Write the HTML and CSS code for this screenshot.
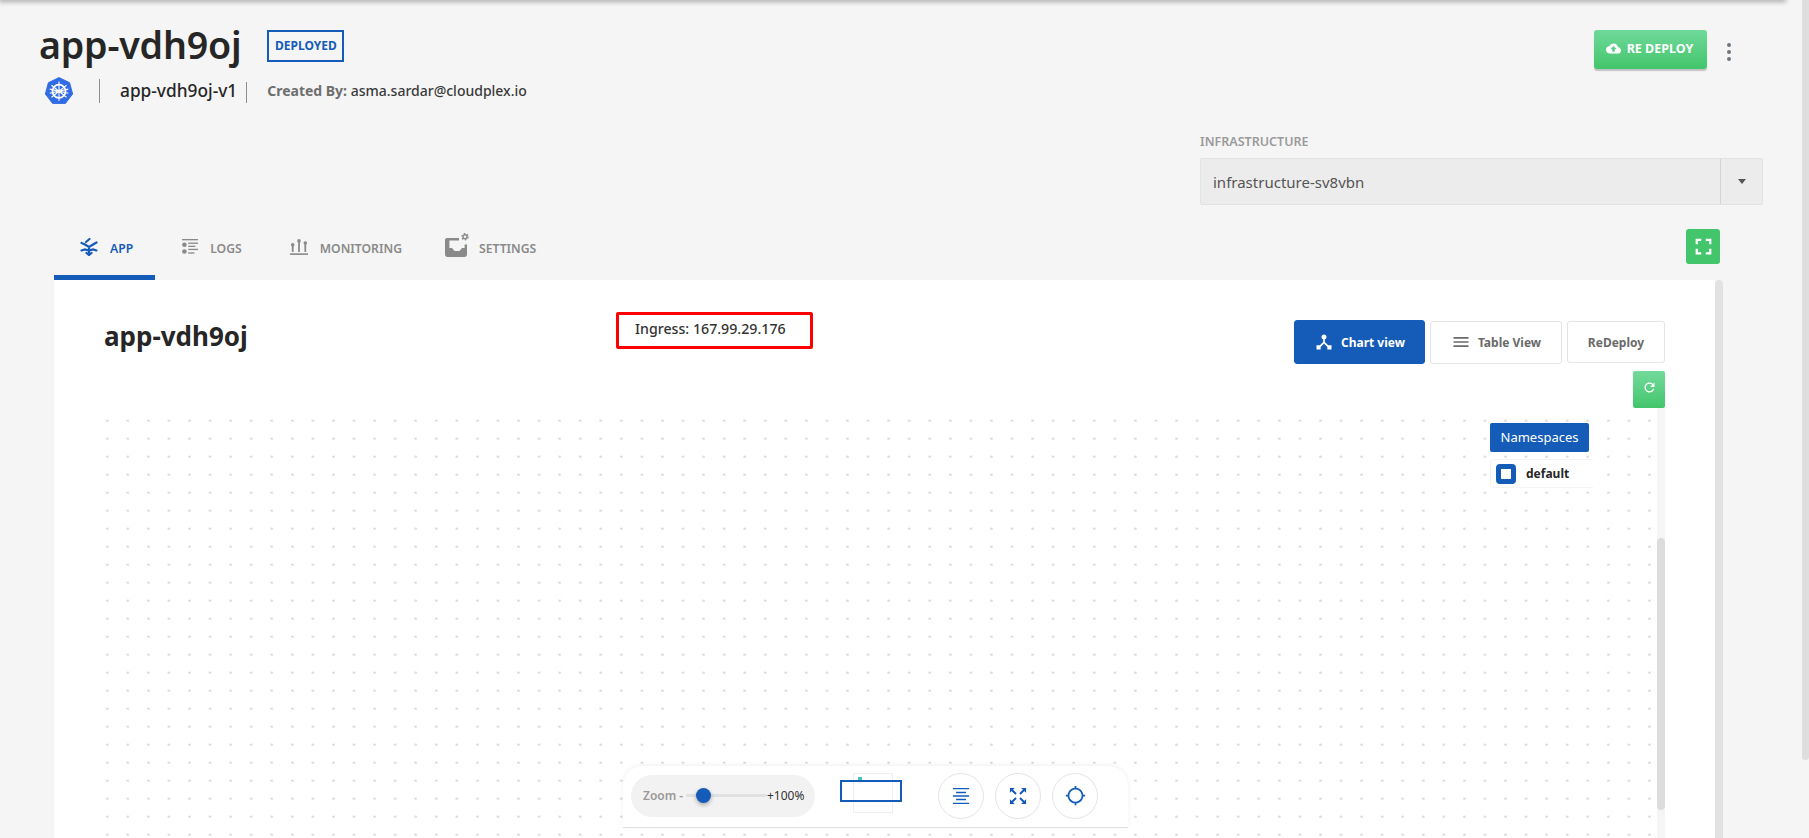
FILE: index.html
```html
<!DOCTYPE html>
<html lang="en">
<head>
  <meta charset="UTF-8" />
  <meta name="viewport" content="width=device-width, initial-scale=1" />
  <title>app-vdh9oj</title>
  <link rel="stylesheet" href="styles.css">
</head>
<body>
  <div class="topbar"></div>
  <div class="page-scroll"></div>

  <header class="page-head">
    <div class="head-left">
      <div class="title-row">
        <h1>app-vdh9oj</h1>
        <span class="status">DEPLOYED</span>
      </div>
      <div class="meta-row">
        <svg class="kube" viewBox="0 0 28 28">
          <path d="M14 .6 24.6 5.7 27.6 17 20.4 26.4 7.6 26.4.4 17 3.4 5.7Z" fill="#326ce5" stroke="#326ce5" stroke-linejoin="round"/>
          <g fill="none" stroke="#fff">
            <circle cx="14" cy="14.2" r="6.6" stroke-width="1.7"/>
            <circle cx="14" cy="14.2" r="1.4" fill="#fff" stroke="none"/>
            <path stroke-width="1.1" d="M14 4.6V23.8M6.5 8.2 21.5 20.2M21.5 8.2 6.5 20.2M4.7 16.3 23.3 12.1M23.3 16.3 4.7 12.1"/>
          </g>
        </svg>
        <span class="version"><span>app-vdh9oj-v1</span></span>
        <span class="created"><b>Created By:</b> asma.sardar@cloudplex.io</span>
      </div>
    </div>
    <div class="head-right">
      <button class="redeploy-btn">
        <svg viewBox="0 0 24 24"><path d="M19.35 10.04C18.67 6.59 15.64 4 12 4 9.11 4 6.6 5.64 5.35 8.04 2.34 8.36 0 10.91 0 14c0 3.31 2.69 6 6 6h13c2.76 0 5-2.24 5-5 0-2.64-2.05-4.78-4.65-4.96zM14 13v4h-4v-4H7l5-5 5 5h-3z"/></svg>
        RE DEPLOY
      </button>
      <div class="more"><i></i><i></i><i></i></div>
    </div>
  </header>

  <section class="infra">
    <label>INFRASTRUCTURE</label>
    <div class="select">
      <span>infrastructure-sv8vbn</span>
      <div class="select-arrow"><i></i></div>
    </div>
  </section>

  <nav class="tabs">
    <a class="tab active">
      <svg class="tab-icon" viewBox="0 0 18 18" fill="none" stroke="currentColor" stroke-width="2.2" stroke-linecap="round">
        <path d="M1.5 5 5 6.500 9 9 13 6.500 16.500 4.500M6 4 9.500 1M1.500 12.500 5 11.500 9 12.500 13 11.500 16.500 12.500M9 9V16.500M6.500 15 9 17 11.500 15"/>
      </svg>
      APP
    </a>
    <a class="tab tab-logs">
      <svg class="tab-icon" viewBox="0 0 18 18" fill="currentColor">
        <rect x="0" y="0" width="18" height="1.500"/>
        <circle cx="2.700" cy="6.500" r="2.600"/>
        <circle cx="2.700" cy="14" r="2.600"/>
        <rect x="7" y="4" width="11" height="1.500"/>
        <rect x="7" y="7.500" width="8" height="1.500"/>
        <rect x="7" y="11" width="11" height="1.500"/>
        <rect x="7" y="15" width="7" height="1.500"/>
      </svg>
      LOGS
    </a>
    <a class="tab">
      <svg class="tab-icon" viewBox="0 0 20 18" fill="currentColor">
        <rect x="0" y="16" width="20" height="1.800"/>
        <rect x="2" y="7" width="2" height="7.500"/>
        <circle cx="3" cy="6.500" r="2"/>
        <rect x="9" y="3" width="2" height="11.500"/>
        <circle cx="10" cy="2.200" r="2"/>
        <rect x="16" y="5" width="2" height="9.500"/>
        <circle cx="17" cy="4.600" r="2"/>
      </svg>
      MONITORING
    </a>
    <a class="tab tab-settings">
      <svg class="tab-icon wide" viewBox="0 0 24 24" fill="currentColor">
        <path d="M2 5h12v2.400H4.400V15H7l2.500 3h5l2.500-3h2.600v-3.500H22V21.500c0 1.400-1.100 2.500-2.500 2.500H2.500C1.100 24 0 22.900 0 21.500V7c0-1.100.9-2 2-2z"/>
        <g fill="none" stroke="currentColor">
          <circle cx="20" cy="3.800" r="2" stroke-width="1.400"/>
          <circle cx="20" cy="3.800" r="3.100" stroke-width="1.300" stroke-dasharray="1.600 1.650"/>
        </g>
      </svg>
      SETTINGS
    </a>
    <button class="fullscreen-btn">
      <svg viewBox="0 0 24 24"><path d="M7 14H5v5h5v-2H7v-3zm-2-4h2V7h3V5H5v5zm12 7h-3v2h5v-5h-2v3zM14 5v2h3v3h2V5h-5z"/></svg>
    </button>
  </nav>

  <div class="card-wrap">
    <main class="card">
      <div class="card-head">
        <h2>app-vdh9oj</h2>
        <div class="ingress">Ingress: 167.99.29.176</div>
        <div class="card-actions">
          <div class="view-btns">
            <button class="view-btn chart">
              <svg viewBox="0 0 24 24"><path d="M17 16l-4-4V8.820C14.160 8.400 15 7.300 15 6c0-1.660-1.340-3-3-3S9 4.340 9 6c0 1.300.84 2.400 2 2.820V12l-4 4H3v5h5v-3.050l4-4.200 4 4.200V21h5v-5h-4z"/></svg>
              Chart view
            </button>
            <button class="view-btn table">
              <svg viewBox="0 0 24 24"><path d="M3 6h18v2H3zM3 11h18v2H3zM3 16h18v2H3z"/></svg>
              Table View
            </button>
            <button class="view-btn plain">ReDeploy</button>
          </div>
          <button class="refresh-btn">
            <svg viewBox="0 0 24 24"><path d="M17.650 6.350C16.200 4.900 14.210 4 12 4c-4.420 0-7.990 3.580-7.990 8s3.570 8 7.990 8c3.730 0 6.840-2.550 7.730-6h-2.080c-.82 2.330-3.040 4-5.650 4-3.310 0-6-2.690-6-6s2.690-6 6-6c1.660 0 3.140.69 4.220 1.780L13 11h7V4l-2.350 2.350z"/></svg>
          </button>
        </div>
      </div>

      <div class="canvas-row">
        <div class="canvas">
          <div class="legend">
            <div class="legend-title">Namespaces</div>
            <div class="legend-item"><span class="check"></span>default</div>
          </div>

          <div class="toolbar">
            <div class="zoom-pill">
              <span class="zoom-label">Zoom -</span>
              <div class="slider"><span class="slider-thumb"></span></div>
              <span class="zoom-value">+100%</span>
            </div>
            <div class="minimap">
              <span class="minimap-node"></span>
              <span class="minimap-view"></span>
            </div>
            <div class="tool-btns">
              <button class="tool-btn">
                <svg viewBox="0 0 20 20"><path d="M1 1h18v1.600H1zM4.500 5.400h11V7h-11zM1 9.200h18v1.600H1zM4.500 13h11v1.600h-11zM1 17.400h18V19H1z"/></svg>
              </button>
              <button class="tool-btn">
                <svg viewBox="0 0 20 20">
                  <path d="M1 1h5.500L1 6.500zM19 1v5.500L13.500 1zM1 19v-5.500L6.500 19zM19 19h-5.500L19 13.500z"/>
                  <path class="arrow-stems" d="M3 3 7.800 7.800M17 3 12.200 7.800M3 17 7.800 12.200M17 17 12.200 12.200"/>
                </svg>
              </button>
              <button class="tool-btn">
                <svg viewBox="0 0 24 24"><path d="M20.940 11c-.46-4.170-3.770-7.480-7.940-7.940V1h-2v2.060C6.830 3.520 3.520 6.830 3.060 11H1v2h2.060c.46 4.170 3.770 7.480 7.940 7.940V23h2v-2.060c4.170-.46 7.480-3.770 7.940-7.940H23v-2h-2.060zM12 19c-3.870 0-7-3.130-7-7s3.130-7 7-7 7 3.130 7 7-3.130 7-7 7z"/></svg>
              </button>
            </div>
          </div>
        </div>
        <div class="canvas-track"><span class="canvas-thumb"></span></div>
      </div>
    </main>
    <div class="card-scroll"></div>
  </div>
</body>
</html>
```

FILE: styles.css
```css
:root {
  --blue: #155cb8;
  --green: #43c56b;
  --bg: #f5f5f5;
  --text: #262626;
  --muted: #8a8a8a;
  --border: #e4e4e4;
}

* {
  box-sizing: border-box;
}

html,
body {
  height: 100%;
}

body {
  margin: 0;
  height: 838px;
  overflow: hidden;
  position: relative;
  display: flex;
  flex-direction: column;
  font-family: "Noto Sans", "Open Sans", sans-serif;
  background: var(--bg);
  color: var(--text);
}

button {
  font-family: inherit;
  cursor: pointer;
}

.topbar {
  position: absolute;
  top: -4px;
  left: 0;
  width: 1785px;
  height: 4px;
  box-shadow: 0 1px 5px 1px rgba(0, 0, 0, 0.3);
}

.page-scroll {
  position: absolute;
  top: 0;
  right: 0;
  width: 7px;
  height: 760px;
  background: #dedede;
  border-radius: 0 0 4px 4px;
}

/* header */
.page-head {
  display: flex;
  justify-content: space-between;
  height: 134px;
  padding: 22px 78px 0 39px;
  flex: none;
}

.title-row {
  display: flex;
  align-items: center;
  gap: 26px;
  height: 46px;
}

h1 {
  margin: 0;
  font-size: 37.6px;
  line-height: 46px;
  font-weight: 600;
  letter-spacing: -0.2px;
}

.status {
  display: flex;
  align-items: center;
  justify-content: center;
  width: 77px;
  height: 32px;
  margin-top: 1px;
  border: 2px solid var(--blue);
  color: var(--blue);
  font-size: 12px;
  font-weight: 700;
}

.meta-row {
  display: flex;
  align-items: center;
  height: 28px;
  margin-top: 9px;
  padding-left: 6px;
}

.kube {
  width: 28px;
  height: 28px;
}

.version {
  display: flex;
  align-items: center;
  height: 24px;
  margin-left: 26px;
  padding: 0 10px 0 20px;
  border-left: 1px solid #8f8f8f;
  font-size: 17.3px;
  font-weight: 500;
  position: relative;
}

.version span {
  margin-top: -2px;
}

.version::after {
  content: "";
  position: absolute;
  right: 0;
  top: 3px;
  bottom: 0;
  border-right: 1px solid #8f8f8f;
}

.created {
  margin-left: 20px;
  margin-top: -2px;
  font-size: 14px;
  font-weight: 500;
  color: #3a3a3a;
}

.created b {
  font-weight: 700;
  color: #6e6e6e;
}

.head-right {
  display: flex;
  align-items: flex-start;
  gap: 20px;
  padding-top: 8px;
}

.redeploy-btn {
  display: flex;
  align-items: center;
  justify-content: center;
  gap: 6px;
  width: 113px;
  height: 39px;
  padding: 0 2px 2px 0;
  border: 0;
  border-radius: 3px;
  background: linear-gradient(#6fd99a, var(--green));
  box-shadow: 0 2px 1px rgba(0, 0, 0, 0.2);
  color: #fff;
  font-size: 12.5px;
  font-weight: 700;
  white-space: nowrap;
}

.redeploy-btn svg {
  width: 15px;
  height: 15px;
  fill: #fff;
}

.more {
  display: flex;
  flex-direction: column;
  gap: 3px;
  padding-top: 13px;
}

.more i {
  display: block;
  width: 4px;
  height: 4px;
  border-radius: 50%;
  background: #6f7680;
}

/* infrastructure select */
.infra {
  flex: none;
  width: 563px;
  margin-left: 1200px;
}

.infra label {
  display: block;
  height: 24px;
  font-size: 12.5px;
  line-height: 16px;
  font-weight: 600;
  color: #9a9a9a;
}

.select {
  display: flex;
  align-items: center;
  justify-content: space-between;
  height: 47px;
  padding-left: 12px;
  background: #ececec;
  border: 1px solid #e2e2e2;
  border-radius: 2px;
  font-size: 15px;
  color: #555;
}

.select-arrow {
  display: flex;
  align-items: center;
  justify-content: center;
  width: 42px;
  height: 100%;
  border-left: 1px solid #d4d4d4;
}

.select-arrow i {
  width: 0;
  height: 0;
  border-left: 4px solid transparent;
  border-right: 4px solid transparent;
  border-top: 5px solid #555;
}

/* tabs */
.tabs {
  flex: none;
  display: flex;
  height: 75px;
  margin-left: 54px;
  width: 1666px;
}

.tab {
  display: flex;
  align-items: center;
  gap: 12px;
  height: 75px;
  padding: 17px 22px 0 26px;
  border-bottom: 5px solid transparent;
  font-size: 12.2px;
  font-weight: 600;
  color: var(--muted);
}

.tab.active {
  color: var(--blue);
  border-bottom-color: var(--blue);
}

.tab-logs .tab-icon {
  width: 16px;
  height: 16px;
  margin-left: 1px;
}

.tab-settings {
  margin-left: -5px;
  gap: 10px;
}

.tab-icon {
  width: 18px;
  height: 18px;
  margin-top: -4px;
}

.tab-icon.wide {
  width: 24px;
  height: 24px;
  margin-top: -8px;
}

.fullscreen-btn {
  display: flex;
  align-items: center;
  justify-content: center;
  width: 34px;
  height: 35px;
  margin: 24px 0 0 auto;
  padding: 0;
  border: 0;
  border-radius: 3px;
  background: var(--green);
}

.fullscreen-btn svg {
  width: 27px;
  height: 27px;
  fill: #fff;
}

/* card */
.card-wrap {
  flex: 1;
  display: flex;
  min-height: 0;
  margin-left: 54px;
}

.card {
  width: 1661px;
  background: #fff;
  display: flex;
  flex-direction: column;
}

.card-scroll {
  width: 8px;
  background: #e2e2e2;
  border-radius: 4px 4px 0 0;
}

.card-head {
  flex: none;
  display: grid;
  grid-template-columns: 512px 197px 1fr;
  height: 128px;
  padding: 32px 50px 0;
}

h2 {
  margin: 6px 0 0;
  font-size: 26px;
  line-height: 36px;
  font-weight: 700;
}

.ingress {
  height: 37px;
  padding-left: 16px;
  border: 3px solid #f00;
  border-radius: 2px;
  font-size: 14.2px;
  line-height: 27px;
  font-weight: 500;
  color: #333;
}

.card-actions {
  display: flex;
  flex-direction: column;
  align-items: flex-end;
  padding-top: 8px;
}

.view-btns {
  display: flex;
  align-items: center;
  gap: 5px;
}

.view-btn {
  display: flex;
  align-items: center;
  justify-content: center;
  gap: 7px;
  height: 43px;
  padding: 0;
  background: #fff;
  border: 1px solid var(--border);
  border-radius: 3px;
  font-size: 12px;
  font-weight: 700;
  color: #6a6a6a;
}

.view-btn svg {
  width: 20px;
  height: 20px;
  fill: currentColor;
}

.view-btn.chart {
  width: 131px;
  height: 44px;
  background: var(--blue);
  border-color: var(--blue);
  color: #fff;
}

.view-btn.table {
  width: 132px;
}

.view-btn.plain {
  width: 98px;
  height: 42px;
}

.refresh-btn {
  display: flex;
  align-items: center;
  justify-content: center;
  width: 32px;
  height: 37px;
  margin-top: 7px;
  padding: 0 0 4px;
  border: 0;
  border-radius: 2px;
  background: linear-gradient(#73da9c, var(--green));
}

.refresh-btn svg {
  width: 15px;
  height: 15px;
  fill: #fff;
}

/* canvas */
.canvas-row {
  flex: 1;
  display: flex;
  min-height: 0;
  padding: 0 50px 0 43px;
}

.canvas {
  flex: 1;
  position: relative;
  background-image: radial-gradient(circle, #d6d6d6 1px, transparent 1.3px);
  background-size: 20.57px 18px;
  background-position: 0 3.7px;
}

.canvas-track {
  flex: none;
  width: 8px;
  position: relative;
  background: var(--bg);
}

.canvas-thumb {
  position: absolute;
  top: 130px;
  left: 0;
  width: 8px;
  height: 272px;
  background: #dcdcdc;
  border-radius: 4px;
}

.legend {
  position: absolute;
  top: 15px;
  left: 1393px;
}

.legend-title {
  width: 99px;
  height: 29px;
  background: var(--blue);
  border-radius: 2px;
  color: #fff;
  font-size: 13px;
  line-height: 29px;
  text-align: center;
}

.legend-item {
  display: flex;
  align-items: center;
  gap: 10px;
  width: 103px;
  height: 29px;
  margin-top: 7px;
  padding-left: 5px;
  background: #fff;
  border: 1px solid #f4f4f4;
  border-right: 0;
  border-radius: 4px 0 0 4px;
  font-size: 12px;
  font-weight: 700;
}

.check {
  width: 20px;
  height: 20px;
  border: 5px solid var(--blue);
  border-radius: 4px;
  background: #fff;
}

/* zoom toolbar */
.toolbar {
  position: absolute;
  top: 358px;
  left: 526px;
  display: flex;
  align-items: center;
  width: 505px;
  height: 62px;
  padding: 0 0 2px 8px;
  background: #fff;
  border-bottom: 1px solid #dedede;
  border-radius: 20px 20px 0 0;
  box-shadow: 0 -1px 5px rgba(0, 0, 0, 0.06);
}

.zoom-pill {
  display: flex;
  align-items: center;
  width: 184px;
  height: 42px;
  padding-left: 12px;
  border-radius: 21px;
  background: #f3f2f2;
  font-size: 12px;
}

.zoom-label {
  width: 43px;
  font-weight: 600;
  color: #999;
  white-space: nowrap;
}

.slider {
  position: relative;
  width: 81px;
  height: 3px;
  background: #e0e0e0;
  border-radius: 2px;
}

.slider-thumb {
  position: absolute;
  top: -6px;
  left: 10px;
  width: 15px;
  height: 15px;
  border-radius: 50%;
  background: var(--blue);
  box-shadow: 0 2px 4px rgba(0, 0, 0, 0.3);
}

.zoom-value {
  color: #333;
}

.minimap {
  position: relative;
  align-self: flex-start;
  width: 40px;
  height: 40px;
  margin: 7px 0 0 38px;
  background: #fff;
  border: 1px solid #eee;
}

.minimap-node {
  position: absolute;
  top: 3px;
  left: 4px;
  width: 4px;
  height: 4px;
  background: #3cc4c4;
}

.minimap-view {
  position: absolute;
  top: 6px;
  left: -14px;
  width: 62px;
  height: 22px;
  border: 2px solid var(--blue);
}

.tool-btns {
  display: flex;
  gap: 11px;
  margin-left: 45px;
}

.tool-btn {
  display: flex;
  align-items: center;
  justify-content: center;
  width: 46px;
  height: 46px;
  padding: 0;
  background: #fff;
  border: 1px solid var(--border);
  border-radius: 50%;
}

.tool-btn svg {
  width: 18px;
  height: 18px;
  fill: var(--blue);
}

.tool-btn:last-child svg {
  width: 21px;
  height: 21px;
}

.arrow-stems {
  fill: none;
  stroke: var(--blue);
  stroke-width: 2.2;
}
```
